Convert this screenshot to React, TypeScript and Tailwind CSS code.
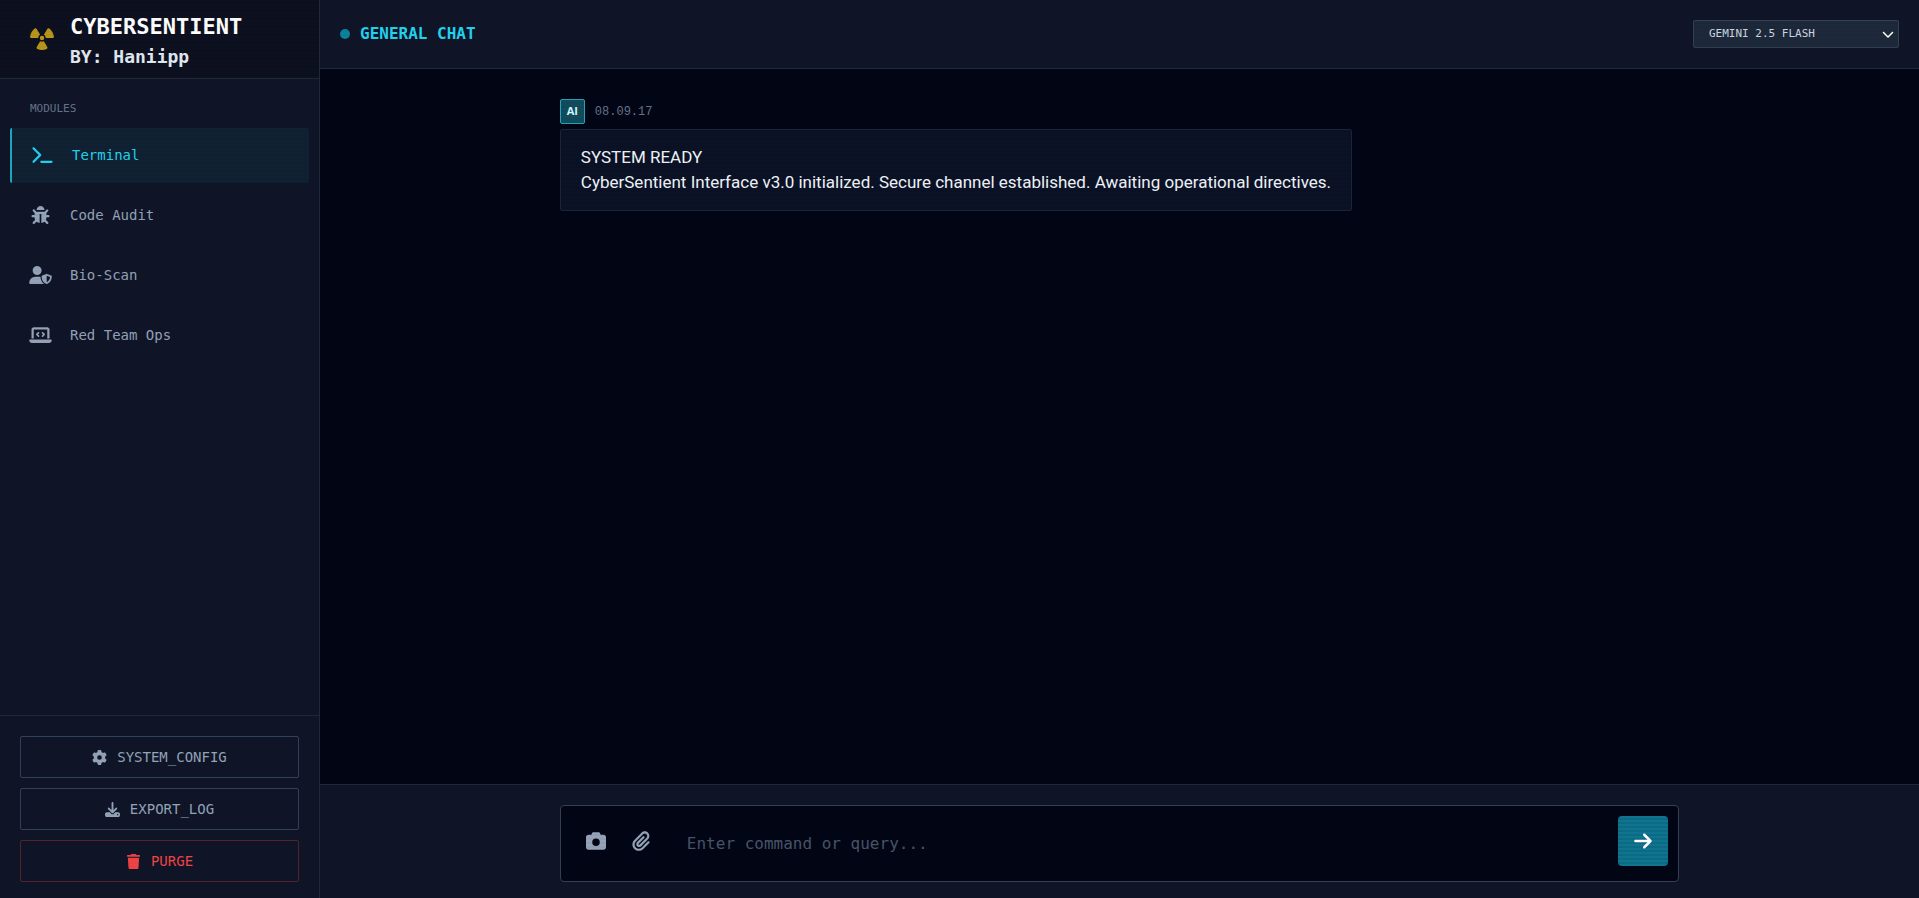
import { useState } from "react"
import type { ComponentType } from "react"
import { FaBug } from "react-icons/fa"
import {
  FaArrowRight,
  FaCamera,
  FaChevronDown,
  FaDownload,
  FaGear,
  FaLaptopCode,
  FaPaperclip,
  FaRadiation,
  FaTerminal,
  FaTrash,
  FaUserShield,
} from "react-icons/fa6"

type Icon = ComponentType<{ className?: string }>

const modules: { id: string; label: string; icon: Icon }[] = [
  { id: "terminal", label: "Terminal", icon: FaTerminal },
  { id: "audit", label: "Code Audit", icon: FaBug },
  { id: "bio", label: "Bio-Scan", icon: FaUserShield },
  { id: "redteam", label: "Red Team Ops", icon: FaLaptopCode },
]

const actions: { label: string; icon: Icon; style: string }[] = [
  { label: "SYSTEM_CONFIG", icon: FaGear, style: "border-[#30425a] text-[#94a3b8]" },
  { label: "EXPORT_LOG", icon: FaDownload, style: "border-[#30425a] text-[#94a3b8]" },
  { label: "PURGE", icon: FaTrash, style: "border-[#54232d] text-[#ef4444]" },
]

export default function App() {
  const [active, setActive] = useState("terminal")
  const [command, setCommand] = useState("")

  return (
    <div className="relative flex h-screen bg-[#020515] font-['DejaVu_Sans_Mono',monospace] text-[#e2e8f0]">
      {/* Sidebar */}
      <aside className="flex w-80 shrink-0 flex-col border-r border-[#1e293b] bg-[#0f1527]">
        <div className="flex items-center gap-4 border-b border-[#1e293b] bg-[#0c101f] px-[30px] pt-[10px] pb-2">
          <FaRadiation className="mb-1 size-6 shrink-0 text-[#b8951a]" />
          <div>
            <h1 className="text-[22px] leading-[34px] font-bold text-white">CYBERSENTIENT</h1>
            <p className="text-lg leading-[26px] font-bold">BY: Haniipp</p>
          </div>
        </div>

        <nav className="flex-1 px-[10px] pt-5">
          <h2 className="px-5 pb-[10px] text-[11px] leading-[19px] text-[#64748b]">MODULES</h2>
          <ul className="flex flex-col gap-[5px]">
            {modules.map(({ id, label, icon: ModuleIcon }) => (
              <li key={id}>
                <button
                  type="button"
                  onClick={() => setActive(id)}
                  className={
                    active === id
                      ? "flex h-[55px] w-full items-center gap-5 rounded-xs border-l-2 border-[#22a6c0] bg-[#0f2133] px-5 pb-0.5 text-sm text-[#22d3ee]"
                      : "flex h-[55px] w-full items-center gap-5 rounded-xs px-5 pb-0.5 text-sm text-[#94a3b8]"
                  }
                >
                  <span className="flex w-5 justify-center">
                    <ModuleIcon className="h-[18px] w-[23px] shrink-0" />
                  </span>
                  {label}
                </button>
              </li>
            ))}
          </ul>
        </nav>

        <div className="flex flex-col gap-[10px] border-t border-[#1e293b] px-5 pt-5 pb-4">
          {actions.map(({ label, icon: ActionIcon, style }) => (
            <button
              key={label}
              type="button"
              className={`flex h-[42px] items-center justify-center gap-[10px] rounded-xs border text-sm ${style}`}
            >
              <ActionIcon className="size-[15px]" />
              {label}
            </button>
          ))}
        </div>
      </aside>

      {/* Chat */}
      <main className="flex min-w-0 flex-1 flex-col">
        <header className="flex h-[69px] items-center justify-between border-b border-[#1e293b] bg-[#0f1527] px-5">
          <div className="flex items-center gap-[10px]">
            <span className="size-[10px] rounded-full bg-[#0d829c]" />
            <h2 className="text-base font-bold text-[#22d3ee]">GENERAL CHAT</h2>
          </div>
          <div className="relative">
            <select
              aria-label="Model"
              className="h-7 w-[206px] appearance-none rounded-xs border border-[#334155] bg-[#1d293a] px-[15px] text-[11px] text-[#cbd5e1]"
            >
              <option>GEMINI 2.5 FLASH</option>
            </select>
            <FaChevronDown className="pointer-events-none absolute top-2 right-[5px] size-3 text-white" />
          </div>
        </header>

        <section className="flex flex-1 flex-col items-start overflow-y-auto px-[15%] pt-[30px]">
          <div className="mb-[5px] flex items-center gap-[10px]">
            <span className="flex size-[25px] items-center justify-center rounded-xs border border-[#22a6c0] bg-[#134b5c] font-['Open_Sans',sans-serif] text-[11px] font-bold text-[#cffafe]">
              AI
            </span>
            <time className="font-['Liberation_Mono',monospace] text-xs text-[#64748b]">08.09.17</time>
          </div>
          <div className="rounded-xs border border-[#1a2538] bg-[#0b1226] px-5 py-[15px] font-['Roboto',sans-serif] text-[17px] leading-[25px] text-[#f1f5f9]">
            <p>SYSTEM READY</p>
            <p>CyberSentient Interface v3.0 initialized. Secure channel established. Awaiting operational directives.</p>
          </div>
        </section>

        <footer className="border-t border-[#1e293b] bg-[#0f1527] px-[15%] pt-5 pb-4">
          <form
            onSubmit={(e) => e.preventDefault()}
            className="flex h-[77px] items-start rounded-sm border border-[#334155] bg-[#020515] p-[10px]"
          >
            <button type="button" aria-label="Capture image" className="flex size-[50px] items-center justify-center text-[#94a3b8]">
              <FaCamera className="size-5" />
            </button>
            <button type="button" aria-label="Attach file" className="flex h-[50px] w-10 items-center justify-center text-[#94a3b8]">
              <FaPaperclip className="size-5" />
            </button>
            <textarea
              aria-label="Command"
              rows={1}
              value={command}
              onChange={(e) => setCommand(e.target.value)}
              placeholder="Enter command or query..."
              className="h-[55px] flex-1 resize-none pt-4 pl-[26px] text-base outline-none placeholder:text-[#475569]"
            />
            <button type="submit" aria-label="Send" className="flex size-[50px] items-center justify-center rounded-sm bg-[#0e7490] bg-[linear-gradient(transparent_50%,rgba(0,0,0,0.06)_50%)] bg-[length:100%_4px] text-white">
              <FaArrowRight className="size-5" />
            </button>
          </form>
        </footer>
      </main>

      {/* Scanlines */}
      <div className="pointer-events-none absolute inset-0 bg-[linear-gradient(transparent_50%,rgba(0,0,0,0.03)_50%)] bg-[length:100%_4px]" />
    </div>
  )
}
